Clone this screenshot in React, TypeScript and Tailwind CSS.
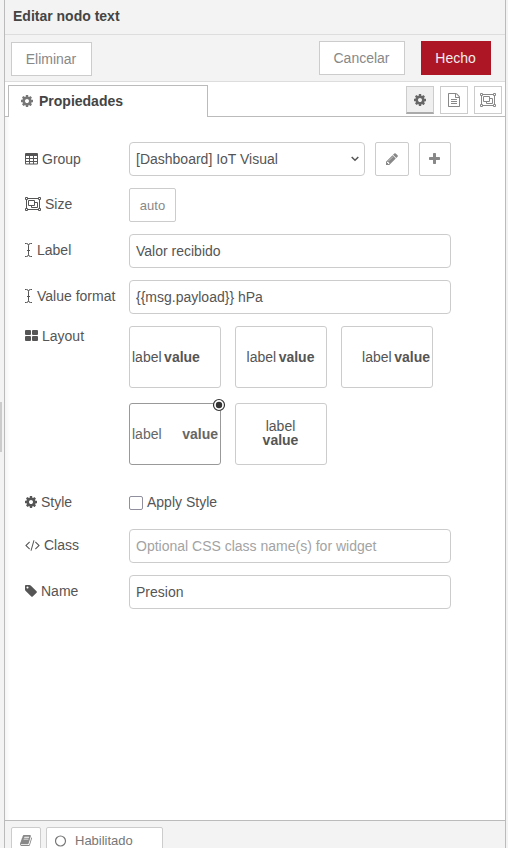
import React from "react";

type GlyphProps = { d: string; box: string; w: number; h?: number; className?: string };

function Glyph({ d, box, w, h = 14, className = "" }: GlyphProps) {
  return (
    <svg viewBox={box} width={w} height={h} fill="currentColor" className={`block shrink-0 ${className}`}>
      <path d={d} />
    </svg>
  );
}

const COG =
  "M1152 896q0-106-75-181t-181-75-181 75-75 181 75 181 181 75 181-75 75-181zm512-109v222q0 12-8 23t-20 13l-185 28q-19 54-39 91 35 50 107 138 10 12 10 25t-9 23q-27 37-99 108t-94 71q-12 0-26-9l-138-108q-44 23-91 38-16 136-29 186-7 28-36 28h-222q-14 0-24.5-8.5t-11.5-21.5l-28-184q-49-16-90-37l-141 107q-10 9-25 9-14 0-25-11-126-114-165-168-7-10-7-23 0-12 8-23 15-21 51-66.5t54-70.5q-27-50-41-99l-183-27q-13-2-21-12.5t-8-23.5v-222q0-12 8-23t19-13l186-28q14-46 39-92-40-57-107-138-10-12-10-24 0-10 9-23 26-36 98.5-107.5t94.5-71.5q13 0 26 10l138 107q44-23 91-38 16-136 29-186 7-28 36-28h222q14 0 24.5 8.500t11.5 21.500l28 184q49 16 90 37l142-107q9-9 24-9 13 0 25 10 129 119 165 170 7 8 7 22 0 12-8 23-15 21-51 66.500t-54 70.500q26 50 41 98l183 28q13 2 21 12.500t8 23.500z";
const FILE =
  "M1596 380q28 28 48 76t20 88v1152q0 40-28 68t-68 28h-1344q-40 0-68-28t-28-68v-1600q0-40 28-68t68-28h896q40 0 88 20t76 48zm-444-244v376h376q-10-29-22-41l-313-313q-12-12-41-22zm384 1528v-1024h-416q-40 0-68-28t-28-68v-416h-768v1536h1280zm-1024-864q0-14 9-23t23-9h704q14 0 23 9t9 23v64q0 14-9 23t-23 9h-704q-14 0-23-9t-9-23v-64zm736 224q14 0 23 9t9 23v64q0 14-9 23t-23 9h-704q-14 0-23-9t-9-23v-64q0-14 9-23t23-9h704zm0 256q14 0 23 9t9 23v64q0 14-9 23t-23 9h-704q-14 0-23-9t-9-23v-64q0-14 9-23t23-9h704z";
const TAG =
  "M576 448q0-53-37.5-90.5t-90.5-37.5-90.5 37.5-37.5 90.5 37.5 90.5 90.5 37.5 90.5-37.5 37.5-90.5zm1067 576q0 53-37 90l-491 492q-39 37-91 37-53 0-90-37l-715-716q-38-37-64.5-101t-26.5-117v-416q0-52 38-90t90-38h416q53 0 117 26.5t102 64.5l715 714q37 39 37 91z";
const PENCIL =
  "M491 1536l91-91-235-235-91 91v107h128v128h107zm523-928q0-22-22-22-10 0-17 7l-542 542q-7 7-7 17 0 22 22 22 10 0 17-7l542-542q7-7 7-17zm-54-192l416 416-832 832h-416v-416zm683 96q0 53-37 90l-166 166-416-416 166-165q36-38 90-38 53 0 91 38l235 234q37 39 37 91z";
const PLUS =
  "M1600 736v192q0 40-28 68t-68 28h-416v416q0 40-28 68t-68 28h-192q-40 0-68-28t-28-68v-416h-416q-40 0-68-28t-28-68v-192q0-40 28-68t68-28h416v-416q0-40 28-68t68-28h192q40 0 68 28t28 68v416h416q40 0 68 28t28 68z";
const CODE =
  "M681 1399l-50 50q-10 10-23 10t-23-10l-466-466q-10-10-10-23t10-23l466-466q10-10 23-10t23 10l50 50q10 10 10 23t-10 23l-393 393 393 393q10 10 10 23t-10 23zm591-1067l-373 1291q-4 13-15.5 19.5t-23.5 2.5l-62-17q-13-4-19.5-15.5t-2.5-24.5l373-1291q4-13 15.5-19.5t23.5-2.5l62 17q13 4 19.5 15.5t2.5 24.5zm657 651l-466 466q-10 10-23 10t-23-10l-50-50q-10-10-10-23t10-23l393-393-393-393q-10-10-10-23t10-23l50-50q10-10 23-10t23 10l466 466q10 10 10 23t-10 23z";
const BOOK =
  "M1703 478q40 57 18 129l-275 906q-19 64-76.5 107.5t-122.5 43.5h-923q-77 0-148.5-53.5t-99.5-131.5q-24-67-2-127 0-4 3-27t4-37q1-8-3-21.5t-3-19.5q2-11 8-21t16.5-23.5 16.5-23.5q23-38 45-91.5t30-91.5q3-10 .5-30t-.5-28q3-11 17-28t17-23q21-36 42-92t25-90q1-9-2.5-32t.5-28q4-13 22-30.5t22-22.5q19-26 42.5-84.5t27.5-96.5q1-8-3-25.5t-2-26.5q2-8 9-18t18-23 17-21q8-12 16.5-30.5t15-35 16-36 19.5-32 26.5-23.5 36-11.5 47.5 5.5l-1 3q38-9 51-9h761q74 0 114 56t18 130l-274 906q-36 119-71.5 153.5t-128.5 34.5h-869q-27 0-38 15-11 16-1 43 24 70 144 70h923q29 0 56-15.5t35-41.5l300-987q7-22 5-57 38 15 59 43zm-1064 2q-4 13 2 22.5t20 9.5h608q13 0 25.5-9.5t16.5-22.5l21-64q4-13-2-22.5t-20-9.5h-608q-13 0-25.5 9.5t-16.5 22.5zm-83 256q-4 13 2 22.5t20 9.5h608q13 0 25.5-9.5t16.5-22.5l21-64q4-13-2-22.5t-20-9.5h-608q-13 0-25.5 9.5t-16.5 22.5z";

const Cog = () => <Glyph d={COG} box="128 0 1536 1792" w={12} />;

// Two overlapping rectangles inside a frame with square handles
function ObjectGroup() {
  return (
    <svg width="16" height="14" viewBox="0 0 16 14" fill="none" stroke="currentColor" className="block shrink-0">
      <path d="M3 1.5h10M3 12.5h10M1.5 3v8M14.5 3v8" />
      <path d="M.5.5h2v2h-2zM13.500.5h2v2h-2zM.5 11.500h2v2h-2zM13.500 11.500h2v2h-2z" />
      <path d="M3.500 3.500h6v5h-6zM10 5.500h2.500v5h-6V9" />
    </svg>
  );
}

function TableIcon() {
  return (
    <svg width="13" height="14" viewBox="0 0 13 14" className="block shrink-0">
      <rect y="1" width="13" height="11.500" rx="1" fill="currentColor" />
      <path
        fill="#fff"
        d="M1 4h3v2H1zM5 4h3v2H5zM9 4h3v2H9zM1 7h3v2H1zM5 7h3v2H5zM9 7h3v2H9zM1 10h3v1.500H1zM5 10h3v1.500H5zM9 10h3v1.500H9z"
      />
    </svg>
  );
}

function CursorIcon() {
  return (
    <svg width="7" height="14" viewBox="0 0 7 14" fill="none" stroke="currentColor" className="block shrink-0">
      <path d="M0 .5h1.500Q3.500.5 3.500 2.500v9q0 2-2 2H0M7 .5H5.500q-2 0-2 2M3.500 11.500q0 2 2 2H7M2 7.500h3" />
    </svg>
  );
}

function GridIcon() {
  return (
    <svg width="13" height="14" viewBox="0 0 13 14" fill="currentColor" className="block shrink-0">
      <rect y="1" width="6" height="5" rx="1" />
      <rect x="7" y="1" width="6" height="5" rx="1" />
      <rect y="7" width="6" height="5" rx="1" />
      <rect x="7" y="7" width="6" height="5" rx="1" />
    </svg>
  );
}

function RowLabel({ icon, gap = "gap-1", children }: { icon: React.ReactNode; gap?: string; children: React.ReactNode }) {
  return (
    <div className={`flex h-8 w-[104px] shrink-0 items-center whitespace-nowrap ${gap}`}>
      {icon}
      <span>{children}</span>
    </div>
  );
}

function TextField({ value, placeholder }: { value?: string; placeholder?: string }) {
  return (
    <input
      readOnly
      defaultValue={value}
      placeholder={placeholder}
      className="h-[34px] w-[322px] rounded-[4px] border border-[#ccc] bg-white px-1.5 text-[#555] outline-none placeholder:text-[#a3a3a3]"
    />
  );
}

const btn = "flex items-center justify-center border border-[#ccc] bg-white text-[#888]";
const tile = "relative flex h-[62px] w-[92px] items-center rounded-[3px] border leading-[14px]";

export default function App() {
  return (
    <div className="relative flex h-[848px] w-[508px] overflow-hidden bg-[#f3f3f3] font-['Liberation_Sans',Arial,sans-serif] text-[14px] leading-5 text-[#555]">
      <div className="flex w-[5px] shrink-0 flex-col border-r border-[#bbb]">
        <div className="mt-[402px] h-[50px] w-[2px] bg-[#ccc]" />
      </div>
      <div className="flex w-[501px] shrink-0 flex-col border-r border-[#bbb] bg-white">
        <div className="h-[35px] shrink-0 border-b border-[#ddd] bg-[#f3f3f3] pt-1.5 pl-2 font-bold text-[#444]">
          Editar nodo text
        </div>
        <div className="flex h-[47px] shrink-0 items-start border-b border-[#ddd] bg-[#f3f3f3] pt-1.5 pr-3.5 pl-1.5">
          <button className={`${btn} mt-px h-[34px] w-[81px] pr-px`}>Eliminar</button>
          <button className={`${btn} ml-auto h-[34px] w-[86px] pr-px`}>Cancelar</button>
          <button className="ml-4 h-[34px] w-[70px] bg-[#ad1625] pr-px text-[#eee]">Hecho</button>
        </div>
        <div className="flex h-[35px] shrink-0 items-stretch pt-[3px]">
          <div className="w-[3px] border-b border-[#bbb]" />
          <div className="flex w-[200px] items-center gap-1.5 border-x border-t border-[#bbb] pb-0.5 pl-3 font-bold text-[#444]">
            <span className="text-[#777]">
              <Cog />
            </span>
            <span>Propiedades</span>
          </div>
          <div className="flex flex-1 items-start justify-end gap-1.5 border-b border-[#bbb] pt-px pr-[3px]">
            <button className="flex h-7 w-7 items-center justify-center border border-b-2 border-[#ccc] border-b-[#aaa] bg-[#efefef] pt-px text-[#666]">
              <Cog />
            </button>
            <button className={`${btn} h-7 w-7`}>
              <Glyph d={FILE} box="128 0 1536 1792" w={12} />
            </button>
            <button className={`${btn} h-7 w-7`}>
              <ObjectGroup />
            </button>
          </div>
        </div>

        <div className="flex flex-1 flex-col bg-[linear-gradient(to_right,#f5f5f5,#fff_5px)] pt-[25px] pl-5">
          <div className="mb-3 flex">
            <div className="pt-px">
              <RowLabel icon={<TableIcon />}>Group</RowLabel>
            </div>
            <div className="flex h-[34px] w-[236px] items-center justify-between rounded-[4px] border border-[#ccc] bg-white pr-[5px] pl-1.5">
              <span>[Dashboard] IoT Visual</span>
              <svg width="8" height="6" viewBox="0 0 8 6" fill="none" stroke="currentColor" strokeWidth="1.500">
                <path d="M.7 1L4 4.300 7.300 1" />
              </svg>
            </div>
            <button className={`${btn} ml-2.5 h-[34px] w-[34px] rounded-[2px]`}>
              <Glyph d={PENCIL} box="128 0 1536 1792" w={12} />
            </button>
            <button className={`${btn} ml-2.5 h-[34px] w-8 rounded-[2px] pr-px`}>
              <Glyph d={PLUS} box="192 0 1408 1792" w={11} />
            </button>
          </div>
          <div className="mb-3 flex">
            <RowLabel icon={<ObjectGroup />}>Size</RowLabel>
            <button className={`${btn} h-[34px] w-[47px] rounded-[2px] pt-px text-[13px]`}>auto</button>
          </div>
          <div className="mb-3 flex">
            <RowLabel icon={<CursorIcon />} gap="gap-[5px]">Label</RowLabel>
            <TextField value="Valor recibido" />
          </div>
          <div className="mb-3 flex">
            <RowLabel icon={<CursorIcon />} gap="gap-[5px]">Value format</RowLabel>
            <TextField value="{{msg.payload}} hPa" />
          </div>
          <div className="flex h-[168px] items-start">
            <div className="-mt-1.5">
              <RowLabel icon={<GridIcon />}>Layout</RowLabel>
            </div>
            <div className="grid grid-cols-[92px_92px_92px] gap-x-3.5 gap-y-[15px]">
              <div className={`${tile} gap-[2.5px] border-[#ccc] px-0.5`}>
                <span>label</span><b>value</b>
              </div>
              <div className={`${tile} justify-center gap-[2.5px] border-[#ccc] pr-px`}>
                <span>label</span><b>value</b>
              </div>
              <div className={`${tile} justify-end gap-[2.5px] border-[#ccc] px-0.5`}>
                <span>label</span><b>value</b>
              </div>
              <div className={`${tile} justify-between border-[#999] px-0.5 text-[#666]`}>
                <span>label</span><b>value</b>
                <svg width="14" height="14" viewBox="0 0 14 14" className="absolute -top-[6px] -right-[6px]">
                  <circle cx="7" cy="7" r="5.500" fill="#fff" stroke="#333" strokeWidth="1.200" />
                  <circle cx="7" cy="7" r="3.200" fill="#333" />
                </svg>
              </div>
              <div className={`${tile} flex-col justify-center border-[#ccc] pr-px pb-0.5`}>
                <span>label</span><b>value</b>
              </div>
            </div>
          </div>
          <div className="mt-[-8px] mb-[11px] flex h-8 items-center">
            <RowLabel icon={<Cog />}>Style</RowLabel>
            <input type="checkbox" readOnly className="mt-px h-3.5 w-3.5 appearance-none rounded-[2px] border border-[#8f8f9d] bg-white" />
            <span className="ml-1">Apply Style</span>
          </div>
          <div className="mb-3 flex">
            <RowLabel icon={<Glyph d={CODE} box="64 0 1920 1792" w={15} />}>Class</RowLabel>
            <TextField placeholder="Optional CSS class name(s) for widget" />
          </div>
          <div className="flex">
            <RowLabel icon={<Glyph d={TAG} box="128 0 1536 1792" w={12} />}>Name</RowLabel>
            <TextField value="Presion" />
          </div>
        </div>

        <div className="flex h-7 shrink-0 items-start gap-[5px] overflow-hidden border-t border-[#bbb] bg-[#f3f3f3] pt-1.5 pl-1.5 text-[13px]">
          <button className={`${btn} h-[27px] w-[30px] shrink-0 rounded-[2px]`}>
            <Glyph d={BOOK} box="64 0 1664 1792" w={12} h={13} />
          </button>
          <button className="flex h-[27px] w-[117px] shrink-0 items-center gap-2 rounded-[2px] border border-[#ccc] bg-white pl-2 text-[#777]">
            <svg width="12" height="12" viewBox="0 0 12 12" fill="none" stroke="currentColor" strokeWidth="1.200">
              <circle cx="5.500" cy="6" r="5" />
            </svg>
            <span>Habilitado</span>
          </button>
        </div>
      </div>
    </div>
  );
}
